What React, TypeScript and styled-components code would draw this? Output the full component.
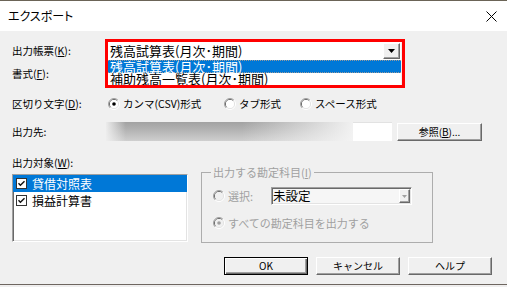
import React from "react"
import styled, { createGlobalStyle, css } from "styled-components"

const FONT = `"Noto Sans CJK JP", "Noto Sans", sans-serif`

const GlobalStyle = createGlobalStyle`
  html, body {
    margin: 0;
    padding: 0;
    background: #efeeee;
  }
  body {
    width: 507px;
    height: 287px;
    overflow: hidden;
    font-family: ${FONT};
    color: #000;
  }
  u {
    text-decoration-thickness: 1px;
    text-underline-offset: 1px;
  }
`

const Window = styled.div`
  width: 507px;
  display: flex;
  flex-direction: column;
  border-top: 1px solid #6b6457;
`

const TitleBar = styled.div`
  height: 30px;
  background: #fff;
  display: flex;
  align-items: center;
  justify-content: space-between;
  padding: 0 10px 0 8px;
`

const Title = styled.span`
  font-size: 12px;
  line-height: 14px;
  font-feature-settings: "palt";
`

const Body = styled.div`
  height: 242px;
  padding: 11px 12px 0 12px;
  background: #f0f0f0;
  border-bottom: 1px solid #6e6660;
  display: flex;
  flex-direction: column;
`

const FieldRow = styled.div<{ $height: number; $gap: number }>`
  display: grid;
  grid-template-columns: 94px 1fr;
  align-items: center;
  height: ${(p) => p.$height}px;
  margin-top: ${(p) => p.$gap}px;
`

const Label = styled.span<{ $disabled?: boolean }>`
  font-size: 10.5px;
  line-height: 12px;
  white-space: nowrap;
  color: ${(p) => (p.$disabled ? "#a0a0a0" : "#000")};
`

/* open combo with red highlight */
const ComboAnchor = styled.div`
  position: relative;
  margin-left: 2px;
  width: 293px;
  height: 18px;
`

const ComboField = styled.div`
  height: 18px;
  background: #fff;
  display: flex;
  align-items: center;
  justify-content: space-between;
  padding-left: 2px;
  font-size: 13px;
  line-height: 14px;
`

const DropButton = styled.div<{ $small?: boolean }>`
  width: ${(p) => (p.$small ? 11 : 17)}px;
  height: ${(p) => (p.$small ? 14 : 16)}px;
  box-sizing: border-box;
  margin-right: 1px;
  background: #f0f0f0;
  border: 1px solid;
  border-color: #fff #696969 #696969 #fff;
  box-shadow: inset -1px -1px #a0a0a0;
  display: flex;
  align-items: center;
  justify-content: center;
`

const DropList = styled.div`
  position: absolute;
  top: 18px;
  left: 0;
  right: 0;
  background: #fff;
  font-size: 13px;
  line-height: 12px;
`

const DropItem = styled.div<{ $selected?: boolean }>`
  height: 12px;
  padding-left: 2px;
  white-space: nowrap;
  ${(p) =>
    p.$selected &&
    css`
      color: #fff;
      background: #0078d7;
      border-top: 1px dotted #9a9a9a;
      border-bottom: 1px dotted #9a9a9a;
      height: 11px;
    `}
`

const RedFrame = styled.div`
  position: absolute;
  top: -3px;
  left: -3px;
  right: -4px;
  height: 49px;
  box-sizing: border-box;
  border: 3px solid #ff0000;
  pointer-events: none;
`

/* radios */
const RadioGroup = styled.div`
  display: flex;
  align-items: center;
  padding-left: 2px;
`

const ControlLine = styled.div`
  display: flex;
  align-items: center;
`

const RadioOption = styled.div<{ $width?: number; $disabled?: boolean; $size?: number }>`
  display: flex;
  align-items: center;
  gap: 3px;
  width: ${(p) => (p.$width ? `${p.$width}px` : "auto")};
  font-size: ${(p) => p.$size ?? 10.5}px;
  line-height: 12px;
  white-space: nowrap;
  color: ${(p) => (p.$disabled ? "#a0a0a0" : "#000")};
`

const RadioSvg = styled.svg`
  flex: none;
  display: block;
`

const RadioMark = ({ checked, disabled }: { checked?: boolean; disabled?: boolean }) => (
  <RadioSvg width="12" height="12" viewBox="0 0 12 12">
    <path d="M2.1 9.9 A5.5 5.5 0 0 1 9.9 2.1" fill="none" stroke="#a0a0a0" />
    <path d="M9.9 2.1 A5.5 5.5 0 0 1 2.1 9.9" fill="none" stroke="#ffffff" />
    <path d="M2.8 9.2 A4.5 4.5 0 0 1 9.2 2.8" fill="none" stroke="#696969" />
    <path d="M9.2 2.8 A4.5 4.5 0 0 1 2.8 9.2" fill="none" stroke="#e3e3e3" />
    <circle cx="6" cy="6" r="4" fill={disabled ? "#f0f0f0" : "#fff"} />
    {checked && <circle cx="6" cy="6" r="1.8" fill={disabled ? "#a0a0a0" : "#000"} />}
  </RadioSvg>
)

/* path row */
const PathField = styled.div`
  width: 286px;
  height: 19px;
  display: flex;
`

const BlurredPath = styled.div`
  flex: 1;
  background:
    linear-gradient(to right, rgba(240, 240, 240, 0.95) 0, rgba(240, 240, 240, 0) 8%, rgba(240, 240, 240, 0) 55%, rgba(245, 245, 245, 0.95) 100%),
    linear-gradient(to bottom, #a2a2a2 0%, #b0b0b0 35%, #cfcfcf 100%);
`

const PathEnd = styled.div`
  width: 39px;
  background: #fff;
  border-top: 1px solid #e2e2e2;
`

const PushButton = styled.button<{ $width: number; $default?: boolean }>`
  width: ${(p) => p.$width}px;
  height: 18px;
  box-sizing: border-box;
  margin: 0;
  padding: 0;
  font-family: ${FONT};
  font-size: 10px;
  line-height: 12px;
  color: #000;
  background: #f0f0f0;
  border: 1px solid;
  border-color: #fff #696969 #696969 #fff;
  box-shadow: inset -1px -1px #a0a0a0;
  ${(p) =>
    p.$default &&
    css`
      border-color: #000;
      box-shadow: inset 1px 1px #fff, inset -1px -1px #696969, inset -2px -2px #a0a0a0;
    `}
`

const BrowseButton = styled(PushButton)`
  margin-left: 5px;
`

/* lower section */
const LowerSection = styled.div`
  display: grid;
  grid-template-columns: 176px 232px;
  column-gap: 13px;
  margin-top: 16px;
  align-items: start;
`

const TargetColumn = styled.div`
  display: flex;
  flex-direction: column;
`

const ListBox = styled.div`
  margin-top: 5px;
  height: 68px;
  box-sizing: border-box;
  background: #fff;
  border: 1px solid;
  border-color: #a0a0a0 #fff #fff #a0a0a0;
  box-shadow: inset 1px 1px #696969, inset -1px -1px #e3e3e3;
`

const ListItem = styled.div<{ $selected?: boolean }>`
  height: 17px;
  display: flex;
  align-items: center;
  gap: 5px;
  padding-left: 3px;
  font-size: 12px;
  line-height: 14px;
  color: ${(p) => (p.$selected ? "#fff" : "#000")};
  background: ${(p) => (p.$selected ? "#0078d7" : "transparent")};
`

const CheckMark = () => (
  <svg width="11" height="11" viewBox="0 0 11 11" style={{ display: "block", flex: "none" }}>
    <rect x="0.5" y="0.5" width="10" height="10" fill="#fff" stroke="#333" />
    <polyline points="2.5,5.3 4.4,7.3 8.5,3.2" fill="none" stroke="#111" strokeWidth="1.4" />
  </svg>
)

const GroupBox = styled.fieldset`
  margin: 9px 0 0 0;
  min-width: 0;
  height: 77px;
  box-sizing: border-box;
  padding: 9px 10px 0 11px;
  border: 1px solid #adadad;
`

const GroupLegend = styled.legend`
  margin-left: -2px;
  padding: 0 2px;
  font-size: 11px;
  line-height: 12px;
  color: #a0a0a0;
  white-space: nowrap;
`

const GroupRow = styled.div<{ $height: number; $gap: number }>`
  display: flex;
  align-items: center;
  height: ${(p) => p.$height}px;
  margin-top: ${(p) => p.$gap}px;
`

const SmallCombo = styled.div`
  width: 141px;
  height: 18px;
  box-sizing: border-box;
  border: 1px solid;
  border-color: #a0a0a0 #fff #fff #a0a0a0;
  box-shadow: inset 1px 1px #696969, inset -1px -1px #e3e3e3;
  background: #f6f6f6;
  display: flex;
  align-items: center;
  justify-content: space-between;
  padding-left: 1px;
  font-size: 12.5px;
  line-height: 14px;
`

const ButtonBar = styled.div`
  display: flex;
  justify-content: flex-end;
  gap: 8px;
  margin-top: 14px;
  padding-right: 3px;
`

const Triangle = ({ color, w, h }: { color: string; w: number; h: number }) => (
  <svg width={w} height={h} viewBox={`0 0 ${w} ${h}`} style={{ display: "block" }}>
    <polygon points={`0,0 ${w},0 ${w / 2},${h}`} fill={color} />
  </svg>
)

const CloseIcon = () => (
  <svg width="11" height="11" viewBox="0 0 11 11" style={{ display: "block" }}>
    <path d="M0.5 0.5 L10.5 10.5 M10.5 0.5 L0.5 10.5" stroke="#000" strokeWidth="1" />
  </svg>
)

export default function App() {
  return (
    <>
      <GlobalStyle />
      <Window>
        <TitleBar>
          <Title>エクスポート</Title>
          <CloseIcon />
        </TitleBar>
        <Body>
          <FieldRow $height={18} $gap={0}>
            <Label>
              出力帳票(<u>K</u>):
            </Label>
            <ComboAnchor>
              <ComboField>
                <span>残高試算表(月次･期間)</span>
                <DropButton>
                  <Triangle color="#000" w={7} h={4} />
                </DropButton>
              </ComboField>
              <DropList>
                <DropItem $selected>残高試算表(月次･期間)</DropItem>
                <DropItem>補助残高一覧表(月次･期間)</DropItem>
              </DropList>
              <RedFrame />
            </ComboAnchor>
          </FieldRow>

          <FieldRow $height={18} $gap={5}>
            <Label>
              書式(<u>F</u>):
            </Label>
            <span />
          </FieldRow>

          <FieldRow $height={18} $gap={12}>
            <Label>
              区切り文字(<u>D</u>):
            </Label>
            <RadioGroup>
              <RadioOption $width={116}>
                <RadioMark checked />
                カンマ(CSV)形式
              </RadioOption>
              <RadioOption $width={76}>
                <RadioMark />
                タブ形式
              </RadioOption>
              <RadioOption>
                <RadioMark />
                スペース形式
              </RadioOption>
            </RadioGroup>
          </FieldRow>

          <FieldRow $height={19} $gap={9}>
            <Label>出力先:</Label>
            <ControlLine>
              <PathField>
                <BlurredPath />
                <PathEnd />
              </PathField>
              <BrowseButton $width={85}>
                参照(<u>B</u>)...
              </BrowseButton>
            </ControlLine>
          </FieldRow>

          <LowerSection>
            <TargetColumn>
              <Label>
                出力対象(<u>W</u>):
              </Label>
              <ListBox>
                <ListItem $selected>
                  <CheckMark />
                  貸借対照表
                </ListItem>
                <ListItem>
                  <CheckMark />
                  損益計算書
                </ListItem>
              </ListBox>
            </TargetColumn>

            <GroupBox>
              <GroupLegend>
                出力する勘定科目(<u>I</u>)
              </GroupLegend>
              <GroupRow $height={18} $gap={0}>
                <RadioOption $width={58} $disabled $size={11}>
                  <RadioMark disabled />
                  選択:
                </RadioOption>
                <SmallCombo>
                  <span>未設定</span>
                  <DropButton $small>
                    <Triangle color="#a0a0a0" w={5} h={3} />
                  </DropButton>
                </SmallCombo>
              </GroupRow>
              <GroupRow $height={12} $gap={12}>
                <RadioOption $disabled $size={11}>
                  <RadioMark checked disabled />
                  すべての勘定科目を出力する
                </RadioOption>
              </GroupRow>
            </GroupBox>
          </LowerSection>

          <ButtonBar>
            <PushButton $width={84} $default>
              OK
            </PushButton>
            <PushButton $width={84}>キャンセル</PushButton>
            <PushButton $width={84}>ヘルプ</PushButton>
          </ButtonBar>
        </Body>
      </Window>
    </>
  )
}
